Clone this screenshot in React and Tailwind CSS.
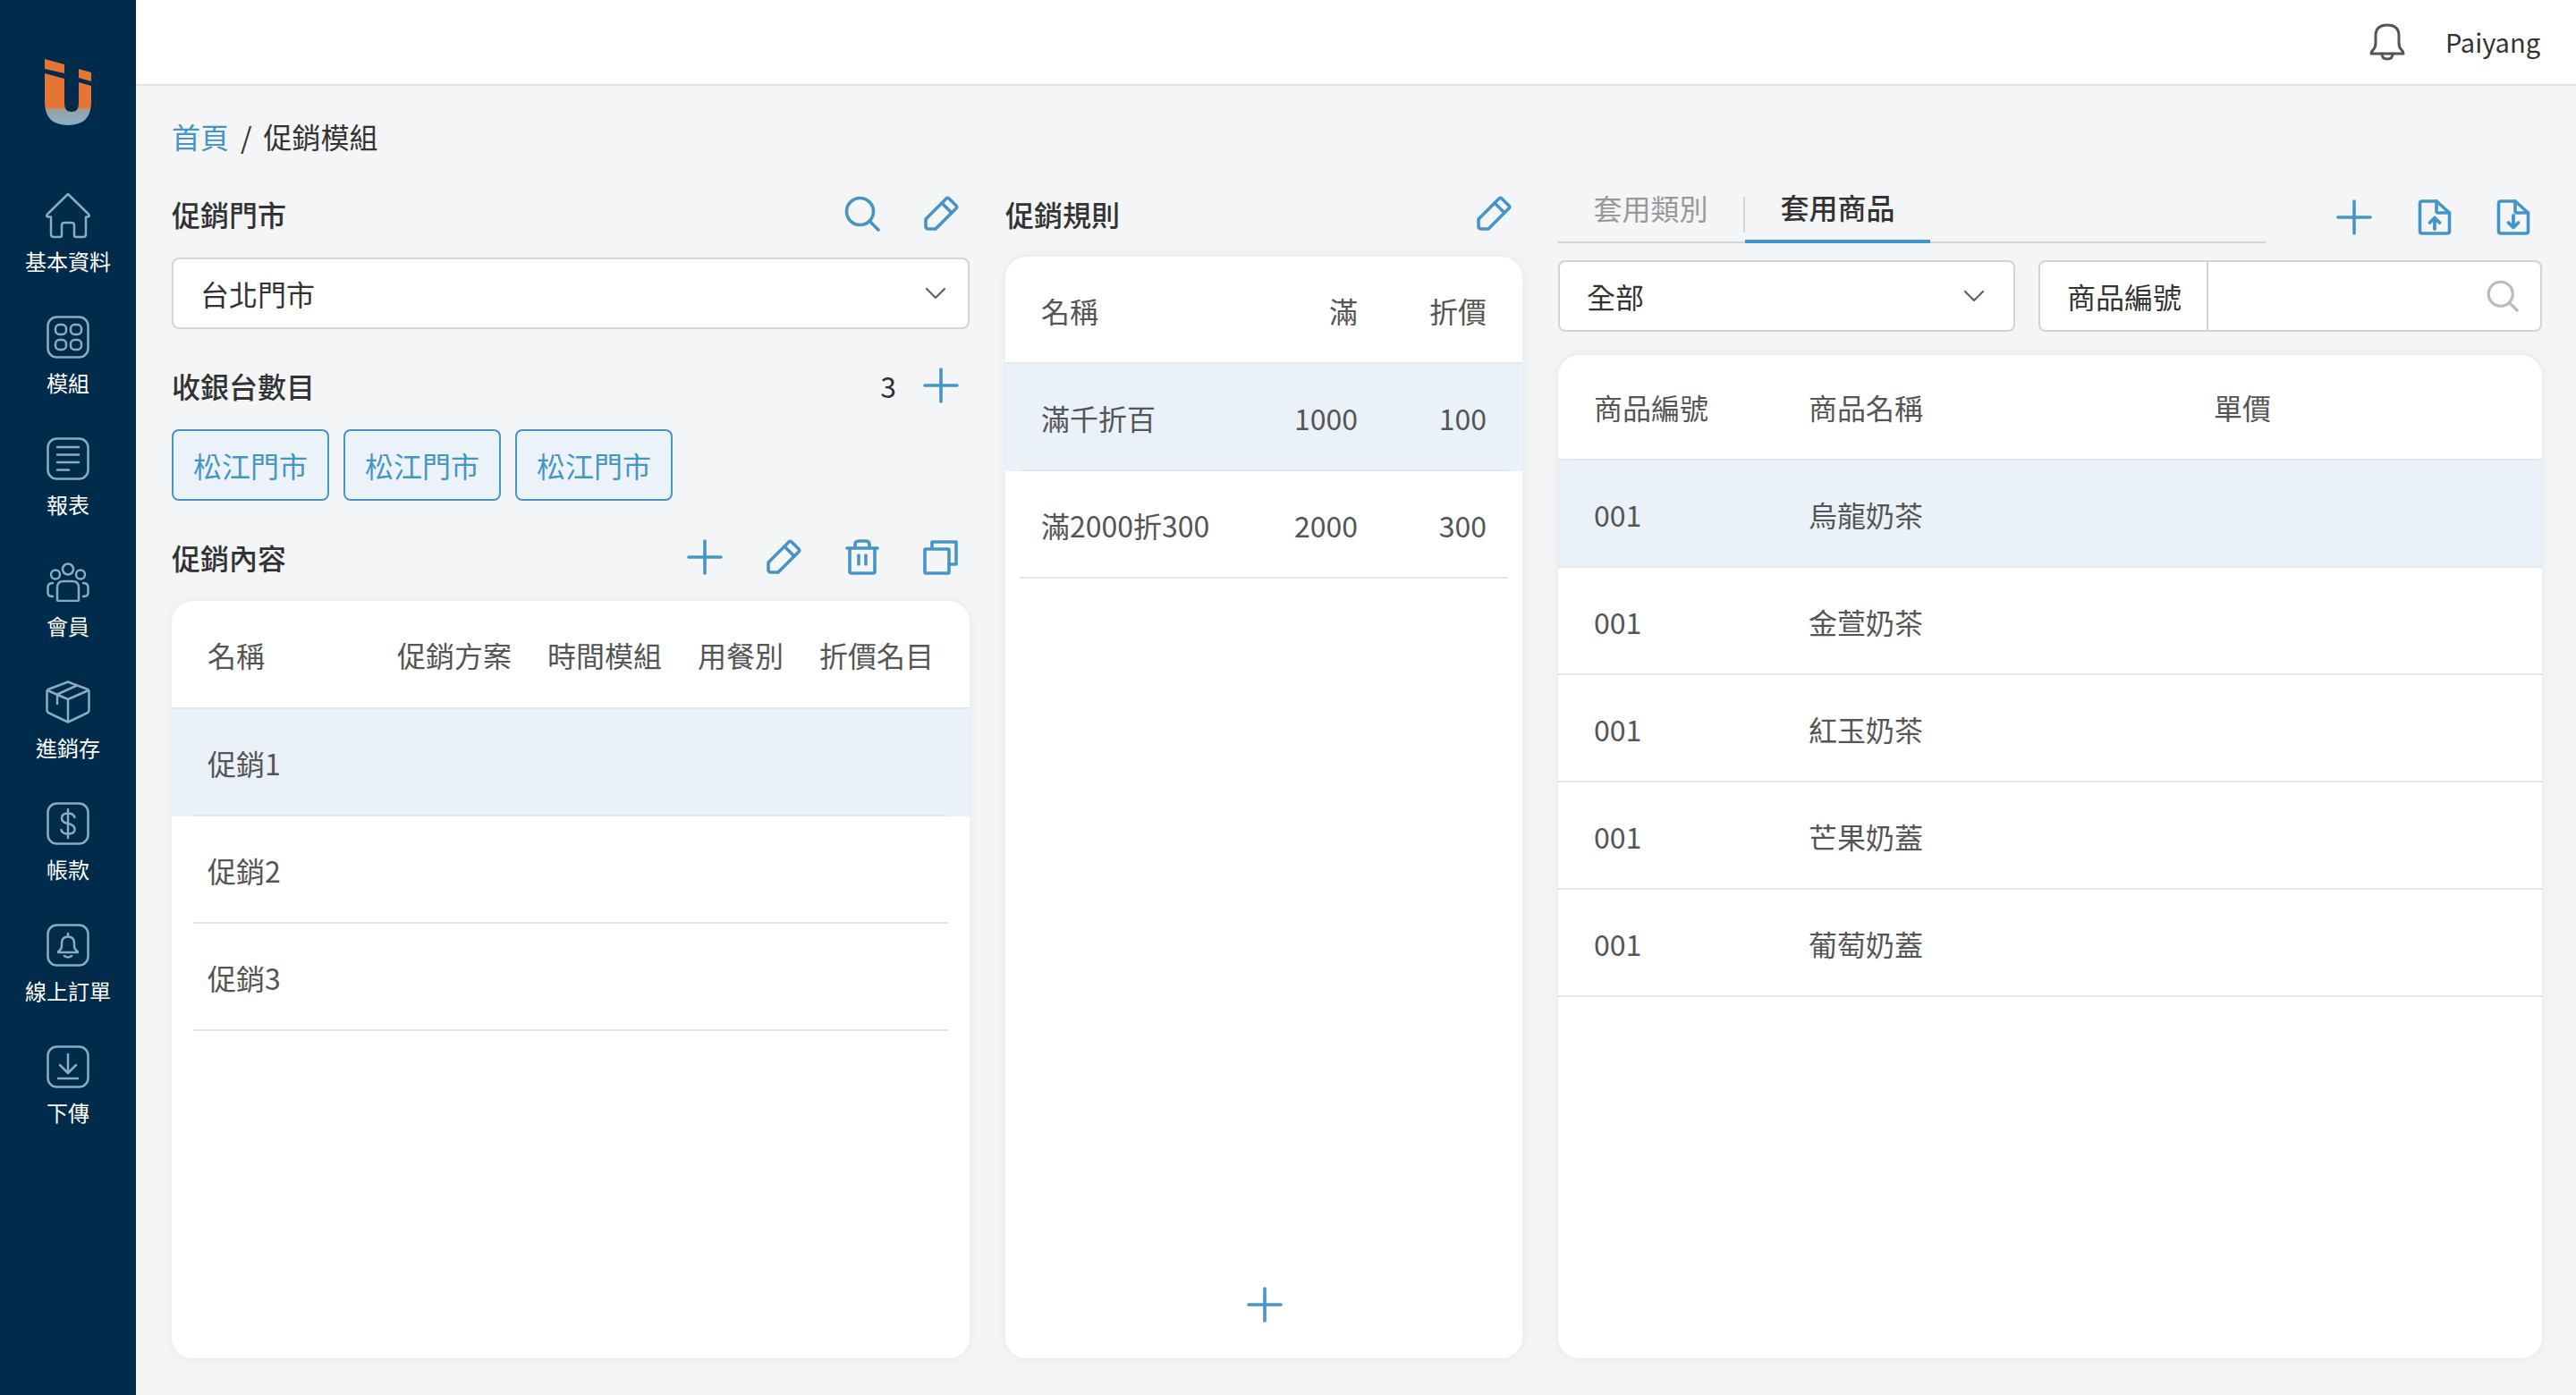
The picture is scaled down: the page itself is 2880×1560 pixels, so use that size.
const BLUE = '#4595c9';

const NAV = [
  { label: '基本資料', icon: HomeIcon },
  { label: '模組', icon: GridIcon },
  { label: '報表', icon: ReportIcon },
  { label: '會員', icon: MembersIcon },
  { label: '進銷存', icon: BoxIcon },
  { label: '帳款', icon: DollarIcon },
  { label: '線上訂單', icon: OrderIcon },
  { label: '下傳', icon: DownloadIcon },
];

const PROMOS = ['促銷1', '促銷2', '促銷3'];
const RULES = [
  { name: '滿千折百', min: '1000', off: '100' },
  { name: '滿2000折300', min: '2000', off: '300' },
];
const PRODUCTS = ['烏龍奶茶', '金萱奶茶', '紅玉奶茶', '芒果奶蓋', '葡萄奶蓋'];

function NavSvg({ w = 48, h = 48, className = '', children }) {
  return (
    <svg width={w} height={h} viewBox={`0 0 ${w} ${h}`} fill="none" stroke="#8aabc0" strokeWidth="2.5" strokeLinecap="round" strokeLinejoin="round" className={className}>
      {children}
    </svg>
  );
}

function HomeIcon() {
  return (
    <NavSvg w={52} h={52} className="translate-y-[2px]">
      <path d="M26 2 L49 24.5 Q51 27 48 27.5 H46 V47 Q46 50 43 50 H35 Q33 50 33 48 V37 Q33 34 30 34 H22 Q19 34 19 37 V48 Q19 50 17 50 H10 Q7 50 7 47 V27.5 H4 Q1 27 3 24.5 Z" />
    </NavSvg>
  );
}

function GridIcon() {
  return (
    <NavSvg>
      <rect x="1.5" y="1.5" width="45" height="45" rx="10" />
      <rect x="10" y="10" width="12" height="11" rx="4.5" />
      <rect x="27" y="10" width="12" height="11" rx="4.5" />
      <rect x="10" y="27" width="12" height="11" rx="4.5" />
      <rect x="27" y="27" width="12" height="11" rx="4.5" />
    </NavSvg>
  );
}

function ReportIcon() {
  return (
    <NavSvg>
      <rect x="1.5" y="1.5" width="45" height="45" rx="10" />
      <path d="M12 11 H36 M12 19.5 H36 M12 28 H36 M12 36.5 H25" />
    </NavSvg>
  );
}

function MembersIcon() {
  return (
    <NavSvg h={44}>
      <circle cx="24" cy="7.5" r="6" />
      <circle cx="10" cy="13.5" r="5" />
      <circle cx="38" cy="13.5" r="5" />
      <path d="M12 42 V28 Q12 21 19 21 H29 Q36 21 36 28 V42 Q36 43 34 43 H14 Q12 43 12 42 Z" />
      <path d="M7 23 Q1.5 23 1.5 28 V34 Q1.5 38 7 38" />
      <path d="M41 23 Q46.5 23 46.5 28 V34 Q46.5 38 41 38" />
    </NavSvg>
  );
}

function BoxIcon() {
  return (
    <NavSvg w={50}>
      <path d="M25 1.5 L46 9.5 Q48.5 10.5 48.5 13 V33 Q48.5 35.5 46 36.5 L25 46.5 L4 36.5 Q1.5 35.5 1.5 33 V13 Q1.5 10.5 4 9.5 Z" />
      <path d="M2 11 L25 21 L48 11 M25 21 V46 M35 5.5 L13 15.5 V26" />
    </NavSvg>
  );
}

function DollarIcon() {
  return (
    <NavSvg>
      <rect x="1.5" y="1.5" width="45" height="45" rx="10" />
      <path d="M31.5 17 Q30 12.5 24 12.5 Q17 12.5 17 18 Q17 22.5 24 24 Q31.5 25.5 31.5 30.5 Q31.5 35.5 24 35.5 Q17.5 35.5 16.5 31 M24 8 V40" />
    </NavSvg>
  );
}

function OrderIcon() {
  return (
    <NavSvg>
      <rect x="1.5" y="1.5" width="45" height="45" rx="10" />
      <path d="M13 32 Q13 30.5 15 29.5 Q17 28 17 25 V22 Q17 14.5 24 14.5 Q31 14.5 31 22 V25 Q31 28 33 29.5 Q35 30.5 35 32 Z M24 11 V14.5 M20 36 Q24 39 28 36" />
    </NavSvg>
  );
}

function DownloadIcon() {
  return (
    <NavSvg>
      <rect x="1.5" y="1.5" width="45" height="45" rx="10" />
      <path d="M24 10 V30 M15 22 L24 31 L33 22 M13 37 H35" />
    </NavSvg>
  );
}

function Logo() {
  return (
    <svg width="52" height="74" viewBox="0 0 52 74">
      <defs>
        <linearGradient id="logoFill" x1="0" y1="0" x2="0" y2="1">
          <stop offset="0.66" stopColor="#e57535" />
          <stop offset="0.7" stopColor="#9a9f9f" />
          <stop offset="1" stopColor="#84b3d2" />
        </linearGradient>
      </defs>
      <path d="M0 0 L22 6 V16 L0 11 Z M38 11 L52 15 V25 L38 21 Z" fill="#e57535" />
      <path d="M0 16 L22 22 V50 Q22 59 30 59 Q38 59 38 50 V26 L52 30 V48 Q52 74 26 74 Q0 74 0 48 Z" fill="url(#logoFill)" />
    </svg>
  );
}

function ActionSvg({ children, color = BLUE, size = 40 }) {
  return (
    <svg width={size} height={size} viewBox="0 0 40 40" fill="none" stroke={color} strokeWidth="3.6" strokeLinecap="round" strokeLinejoin="round" className="shrink-0">
      {children}
    </svg>
  );
}

const PlusIcon = () => (
  <ActionSvg><path d="M20 2 V38 M2 20 H38" /></ActionSvg>
);

const PencilIcon = () => (
  <ActionSvg>
    <path d="M3 26 L26 3 Q27.5 1.5 29 3 L37 11 Q38.5 12.5 37 14 L14 37 H6 Q3 37 3 34 Z" />
    <path d="M21 8 L32 19" />
  </ActionSvg>
);

const SearchIcon = ({ color = BLUE, size = 40 }) => (
  <ActionSvg color={color} size={size}>
    <circle cx="17.5" cy="17.5" r="15" />
    <path d="M29 29 L38 38" />
  </ActionSvg>
);

const TrashIcon = () => (
  <ActionSvg>
    <path d="M3 10 H37 M12 10 V6 Q12 2 16 2 H24 Q28 2 28 6 V10 M6 10 V36 Q6 38 8 38 H32 Q34 38 34 36 V10 M16 18 V28 M24 18 V28" />
  </ActionSvg>
);

const CopyIcon = () => (
  <ActionSvg>
    <path d="M10 10 V3 H37 V28 H29" />
    <rect x="2" y="11" width="27" height="27" rx="1" />
  </ActionSvg>
);

const FileUpIcon = () => (
  <ActionSvg>
    <path d="M22 2 H6 Q3.5 2 3.5 4.5 V35.5 Q3.5 38 6 38 H34 Q36.5 38 36.5 35.5 V15 Z" />
    <path d="M22 2 V13 Q22 15 24 15 H36.5" />
    <path d="M20 33 V22 M14.5 26 L20 20.5 L25.5 26" strokeWidth="3.8" />
  </ActionSvg>
);

const FileDownIcon = () => (
  <ActionSvg>
    <path d="M22 2 H6 Q3.5 2 3.5 4.5 V35.5 Q3.5 38 6 38 H34 Q36.5 38 36.5 35.5 V15 Z" />
    <path d="M22 2 V13 Q22 15 24 15 H36.5" />
    <path d="M20 18 V30 M14.5 26 L20 31.5 L25.5 26" strokeWidth="3.8" />
  </ActionSvg>
);

const Chevron = () => (
  <svg width="24" height="14" viewBox="0 0 24 14" fill="none" stroke="#666666" strokeWidth="2.4" strokeLinecap="round" strokeLinejoin="round">
    <path d="M2 2 L12 12 L22 2" />
  </svg>
);

function Sidebar() {
  return (
    <aside className="w-[152px] shrink-0 bg-[#012b4a] flex flex-col items-center pt-[66px]">
      <div className="mb-[73px] h-[74px]">
        <Logo />
      </div>
      <nav className="flex flex-col gap-[41px]">
        {NAV.map(({ label, icon: Icon }) => (
          <div key={label} className="flex flex-col items-center">
            <div className="h-[52px] flex items-end">
              <Icon />
            </div>
            <span className="mt-[11px] text-[24px] leading-[32px] text-white">{label}</span>
          </div>
        ))}
      </nav>
    </aside>
  );
}

function SectionHeading({ title, children }) {
  return (
    <div className="h-[48px] flex items-center justify-between pr-3">
      <h2 className="text-[32px] leading-[48px] font-medium text-[#333333]">{title}</h2>
      <div className="flex items-center gap-[48px]">{children}</div>
    </div>
  );
}

function SelectBox({ value, className }) {
  return (
    <div className={`h-[80px] bg-white border-2 border-[#d1d3d6] rounded-lg pl-[30px] flex items-center justify-between text-[32px] text-[#333333] ${className}`}>
      <span>{value}</span>
      <Chevron />
    </div>
  );
}

function Card({ children, className = '' }) {
  return (
    <div className={`bg-white rounded-3xl shadow-[0_0_14px_rgba(0,0,0,0.06)] overflow-hidden flex flex-col ${className}`}>
      {children}
    </div>
  );
}

function PromoPanel() {
  return (
    <section className="w-[892px] shrink-0 flex flex-col">
      <SectionHeading title="促銷門市">
        <SearchIcon />
        <PencilIcon />
      </SectionHeading>
      <SelectBox value="台北門市" className="mt-[25px] pr-[24px]" />

      <div className="mt-[39px]">
        <SectionHeading title="收銀台數目">
          <div className="flex items-center gap-[30px]">
            <span className="text-[32px] text-[#333333]">3</span>
            <PlusIcon />
          </div>
        </SectionHeading>
      </div>
      <div className="mt-[25px] flex gap-4">
        {[0, 1, 2].map((i) => (
          <div key={i} className="w-[176px] h-[80px] flex items-center justify-center bg-[#ebf2f9] border-2 border-[#4595c9] rounded-lg text-[32px] text-[#4595c9]">
            松江門市
          </div>
        ))}
      </div>

      <div className="mt-[39px]">
        <SectionHeading title="促銷內容">
          <PlusIcon />
          <PencilIcon />
          <TrashIcon />
          <CopyIcon />
        </SectionHeading>
      </div>
      <Card className="mt-[25px] flex-1">
        <div className="h-[121px] shrink-0 px-10 flex items-center gap-10 border-b-2 border-[#e5e7ea] text-[32px] text-[#555555]">
          <span className="flex-1">名稱</span>
          <span>促銷方案</span>
          <span>時間模組</span>
          <span>用餐別</span>
          <span>折價名目</span>
        </div>
        {PROMOS.map((name, i) => (
          <div key={name} className={i === 0 ? 'bg-[#ebf1f8]' : ''}>
            <div className="mx-6 h-[120px] flex items-center px-4 pt-[1px] border-b-2 border-[#e5e7ea] text-[32px] text-[#555555]">
              {name}
            </div>
          </div>
        ))}
      </Card>
    </section>
  );
}

function RulePanel() {
  return (
    <section className="w-[578px] shrink-0 flex flex-col">
      <SectionHeading title="促銷規則">
        <PencilIcon />
      </SectionHeading>
      <Card className="mt-[24px] flex-1">
        <div className="h-[120px] shrink-0 px-10 pt-[2px] flex items-center border-b-2 border-[#e5e7ea] text-[32px] text-[#555555]">
          <span className="flex-1">名稱</span>
          <span>滿</span>
          <span className="w-[144px] text-right">折價</span>
        </div>
        {RULES.map((rule, i) => (
          <div key={rule.name} className={i === 0 ? 'bg-[#ebf1f8]' : ''}>
            <div className="mx-4 h-[120px] flex items-center px-6 pt-[2px] border-b-2 border-[#e5e7ea] text-[32px] text-[#555555]">
              <span className="flex-1">{rule.name}</span>
              <span>{rule.min}</span>
              <span className="w-[144px] text-right">{rule.off}</span>
            </div>
          </div>
        ))}
        <div className="mt-auto h-[118px] flex justify-center pt-[38px] pl-[2px]">
          <PlusIcon />
        </div>
      </Card>
    </section>
  );
}

function ProductPanel() {
  return (
    <section className="w-[1100px] shrink-0 flex flex-col">
      <div className="h-[57px] flex items-start">
        <div className="w-[791px] h-[57px] flex items-start border-b-2 border-[#d1d3d6]">
          <div className="w-[209px] h-[40px] mt-[5px] pb-[16px] border-r-2 border-[#d1d3d6] flex items-center justify-center">
            <span className="text-[32px] leading-[36px] text-[#999999]">套用類別</span>
          </div>
          <div className="w-[207px] h-[57px] border-b-4 border-[#4595c9] flex items-start justify-center">
            <span className="text-[32px] leading-[32px] text-[#333333] font-medium">套用商品</span>
          </div>
        </div>
        <div className="flex-1 flex items-center justify-end gap-[48px] pr-3 pt-[8px]">
          <div className="mr-[2px]">
            <PlusIcon />
          </div>
          <FileUpIcon />
          <FileDownIcon />
        </div>
      </div>

      <div className="mt-[19px] flex gap-[26px]">
        <SelectBox value="全部" className="w-[511px] shrink-0 pr-[32px]" />
        <div className="flex-1 h-[80px] bg-white border-2 border-[#d1d3d6] rounded-lg flex items-center">
          <div className="h-full pl-[30px] pr-[28px] border-r-2 border-[#d1d3d6] flex items-center text-[32px] text-[#333333]">商品編號</div>
          <div className="flex-1 flex justify-end pr-6">
            <SearchIcon color="#bbbbbb" size={36} />
          </div>
        </div>
      </div>

      <Card className="mt-[26px] flex-1">
        <div className="h-[118px] shrink-0 px-10 flex items-center border-b-2 border-[#e5e7ea] text-[32px] text-[#555555]">
          <span className="w-[240px]">商品編號</span>
          <span className="w-[453px]">商品名稱</span>
          <span>單價</span>
        </div>
        {PRODUCTS.map((name, i) => (
          <div key={name} className={`h-[120px] shrink-0 px-10 pt-[2px] flex items-center border-b-2 border-[#e5e7ea] text-[32px] text-[#555555] ${i === 0 ? 'bg-[#ebf1f8]' : ''}`}>
            <span className="w-[240px]">001</span>
            <span>{name}</span>
          </div>
        ))}
      </Card>
    </section>
  );
}

export default function App() {
  return (
    <div className="w-[2880px] h-[1560px] flex overflow-hidden bg-[#f4f5f7] [font-family:'Noto_Sans_CJK_TC','Noto_Sans',sans-serif]">
      <Sidebar />
      <div className="flex-1 flex flex-col min-w-0">
        <header className="h-[96px] shrink-0 bg-white border-b-2 border-[#e2e3e5] flex items-center justify-end pr-10">
          <svg width="40" height="42" viewBox="0 0 40 42" fill="none" stroke="#555555" strokeWidth="3" strokeLinecap="round" strokeLinejoin="round" className="mr-[45px]">
            <path d="M2 34 Q2 31.5 4 30 Q7 27 7 22 V14 Q7 2 20 2 Q33 2 33 14 V22 Q33 27 36 30 Q38 31.5 38 34 Z" />
            <path d="M14 34 Q14 40 20 40 Q26 40 26 34" />
          </svg>
          <span className="text-[29px] text-[#333333]">Paiyang</span>
        </header>

        <main className="flex-1 flex flex-col pl-10 pt-[32px] pb-[41px] min-h-0">
          <div className="h-[48px] flex items-center gap-[13px] text-[32px] leading-[48px]">
            <a href="#" className="text-[#4595c9]">首頁</a>
            <span className="text-[#333333]">/</span>
            <span className="text-[#333333]">促銷模組</span>
          </div>
          <div className="mt-[39px] flex-1 flex gap-10 min-h-0">
            <PromoPanel />
            <RulePanel />
            <ProductPanel />
          </div>
        </main>
      </div>
    </div>
  );
}
